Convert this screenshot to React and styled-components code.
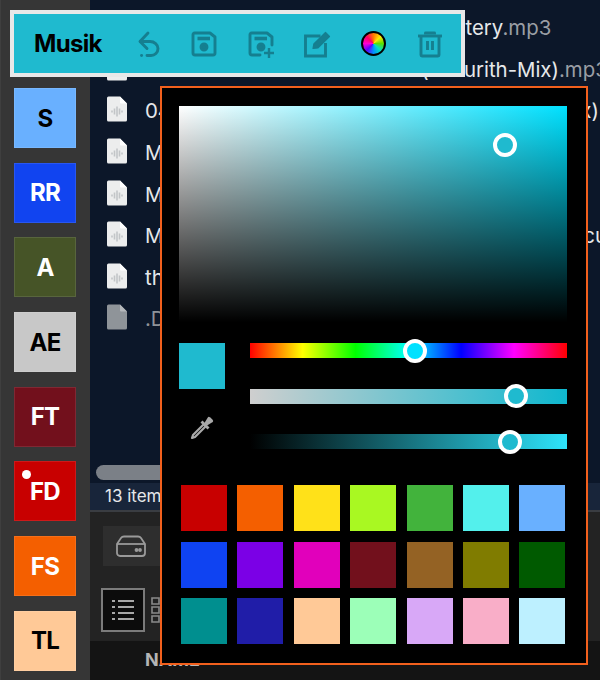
import React from "react";
import styled, { createGlobalStyle } from "styled-components";

const GlobalStyle = createGlobalStyle`
  html, body {
    margin: 0;
    padding: 0;
    background: #333;
  }
  body {
    font-family: Inter, "Liberation Sans", sans-serif;
  }
`;

const Page = styled.div`
  position: relative;
  width: 600px;
  height: 680px;
  overflow: hidden;
  display: flex;
`;

const Sidebar = styled.div`
  flex: 0 0 90px;
  box-sizing: border-box;
  background: #363636;
  border-left: 1px solid #3f3f3f;
  padding: 88px 0 0 13px;
  display: flex;
  flex-direction: column;
  gap: 14.7px;
`;

const Tile = styled.div`
  position: relative;
  flex: 0 0 60px;
  width: 62px;
  box-sizing: border-box;
  background: ${p => p.$bg};
  color: ${p => (p.$light ? "#fff" : "#000")};
  border: 1px solid rgba(255, 255, 255, 0.1);
  display: flex;
  align-items: center;
  justify-content: center;
  font-weight: 700;
  font-size: 24px;
  letter-spacing: -0.7px;
`;

const Dot = styled.span`
  position: absolute;
  top: 8px;
  left: 7px;
  width: 9px;
  height: 9px;
  border-radius: 50%;
  background: #fff;
`;

const Browser = styled.div`
  flex: 1;
  min-width: 0;
  display: flex;
  flex-direction: column;
`;

const FileArea = styled.div`
  position: relative;
  height: 483px;
  box-sizing: border-box;
  background: #0c1729;
  padding: 7px 0 0 17px;
`;

const FileRow = styled.div`
  height: 41.6px;
  display: flex;
  align-items: center;
  gap: 18px;
  font-size: 20.4px;
  white-space: nowrap;
  color: ${p => (p.$hidden ? "#8f9398" : "#e6e8ea")};
`;

const FileGlyph = styled.svg`
  flex: 0 0 20px;
  margin-bottom: 3px;
`;

const Ext = styled.span`
  color: #9a9ea4;
`;

const Scrollbar = styled.div`
  position: absolute;
  left: 6px;
  bottom: 3px;
  width: 200px;
  height: 15px;
  border-radius: 8px;
  background: #7b8087;
`;

const StatusBar = styled.div`
  height: 29px;
  box-sizing: border-box;
  background: #18253a;
  border-bottom: 2px solid #3a3d42;
  padding: 0 0 0 15px;
  font-size: 17px;
  line-height: 27px;
  color: #e6e8ea;
`;

const Lower = styled.div`
  flex: 1;
  background: #232323;
  display: flex;
  flex-direction: column;
`;

const DriveBar = styled.div`
  height: 75px;
  box-sizing: border-box;
  padding: 14px 0 0 13px;
`;

const DriveButton = styled.div`
  width: 150px;
  height: 40px;
  background: #2e2e2e;
  padding-left: 13px;
  display: flex;
  align-items: center;
`;

const ViewBar = styled.div`
  height: 46px;
  padding-left: 11px;
  display: flex;
  align-items: center;
  gap: 6px;
`;

const ListButton = styled.div`
  width: 44px;
  height: 44px;
  box-sizing: border-box;
  border: 2px solid #7b7b7b;
  background: #0c0c0c;
  display: flex;
  align-items: center;
  justify-content: center;
`;

const ColumnHeader = styled.div`
  flex: 1;
  margin-top: 8px;
  background: #141414;
  padding: 8px 0 0 55px;
  font-size: 18px;
  font-weight: 700;
  color: #b5b5b5;
`;

const Toolbar = styled.div`
  position: absolute;
  top: 10px;
  left: 10px;
  width: 455px;
  height: 67px;
  box-sizing: border-box;
  background: #1fbacf;
  border: 4px solid #e8e8e8;
  display: flex;
  align-items: center;
  padding-left: 20px;
`;

const Title = styled.div`
  width: 100px;
  font-size: 24px;
  font-weight: 700;
  letter-spacing: -0.7px;
  color: #000;
`;

const Tools = styled.div`
  display: flex;
  align-items: center;
  gap: 28.4px;
`;

const ToolIcon = styled.svg`
  display: block;
  width: 28px;
  height: 28px;
  fill: none;
  stroke: #157f90;
  stroke-width: 2.9;
  stroke-linecap: round;
  stroke-linejoin: round;
`;

const WheelSlot = styled.div`
  width: 28px;
  height: 28px;
  display: flex;
  align-items: center;
  justify-content: center;
`;

const Wheel = styled.div`
  flex: 0 0 25px;
  height: 25px;
  border-radius: 50%;
  box-sizing: border-box;
  border: 2.5px solid #000;
  background: conic-gradient(
    #ff7a00,
    #ffe600,
    #5be000,
    #00e0c0,
    #0090ff,
    #6000ff,
    #ff00d0,
    #ff0060,
    #ff7a00
  );
`;

const Picker = styled.div`
  position: absolute;
  top: 86px;
  left: 160px;
  width: 428px;
  height: 579px;
  box-sizing: border-box;
  background: #000;
  border: 2px solid #f2601d;
  padding: 18px 19px 0 17px;
`;

const SatArea = styled.div`
  position: relative;
  height: 216px;
  background:
    linear-gradient(to top, #000 0%, rgba(0, 0, 0, 0) 100%),
    linear-gradient(to right, #fff 0%, #00e1ff 100%);
`;

const Thumb = styled.div`
  position: absolute;
  left: ${p => p.$x}px;
  top: ${p => p.$y}px;
  width: 24px;
  height: 24px;
  box-sizing: border-box;
  border-radius: 50%;
  border: 4px solid #fff;
  background: ${p => p.$color};
  transform: translate(-50%, -50%);
`;

const Controls = styled.div`
  display: flex;
  gap: 25px;
  margin-top: 21px;
`;

const PreviewColumn = styled.div`
  flex: 0 0 46px;
  display: flex;
  flex-direction: column;
  align-items: center;
  gap: 27px;
`;

const Preview = styled.div`
  width: 46px;
  height: 46px;
  background: #1fbacf;
`;

const Sliders = styled.div`
  flex: 1;
  display: flex;
  flex-direction: column;
  gap: 30.5px;
`;

const Track = styled.div`
  position: relative;
  height: 15px;
  background: ${p => p.$bg};
`;

const Swatches = styled.div`
  display: grid;
  grid-template-columns: repeat(7, 46px);
  grid-auto-rows: 46px;
  column-gap: 10.4px;
  row-gap: 10.5px;
  margin: 36px 0 0 2px;
`;

const Swatch = styled.div`
  background: ${p => p.$bg};
`;

const tiles = [
  { label: "S", bg: "#69b0ff" },
  { label: "RR", bg: "#1144f0", light: true },
  { label: "A", bg: "#465427", light: true },
  { label: "AE", bg: "#c8c8c8" },
  { label: "FT", bg: "#72101c", light: true },
  { label: "FD", bg: "#c80000", light: true, dot: true },
  { label: "FS", bg: "#f45f00", light: true },
  { label: "TL", bg: "#ffc997" }
];

const files = [
  { name: "02-Shakti-Sundari-Sarasvat-Mystery", ext: ".mp3" },
  { name: "03-Lotus-Sutra-Gaia-Chant-(Tanurith-Mix)", ext: ".mp3" },
  { name: "04-Mantra-Sangha-Meditation-Dub-Long-Mix)", ext: ".mp3" },
  { name: "Mantra-One", ext: ".mp3" },
  { name: "Mantra-Two", ext: ".mp3" },
  { name: "Mantra-Three-Ganesha-Meditation-Dubs-Percussion", ext: ".mp3" },
  { name: "the-end", ext: ".mp3" },
  { name: ".DS_Store", hidden: true }
];

const swatches = [
  "#c80000", "#f45f00", "#ffe119", "#a9f822", "#42b33c", "#53f0ec", "#69b0ff",
  "#0f43f2", "#7b00e6", "#e100bb", "#72101c", "#946224", "#807c00", "#005a00",
  "#008f8f", "#201da8", "#ffc997", "#9cffb8", "#d8a8f7", "#f9aec8", "#bdf0ff"
];

const hue =
  "linear-gradient(to right, #f00 0%, #ff0 16.6%, #0f0 33.3%, #0ff 50%, #00f 66.6%, #f0f 83.3%, #f00 100%)";

const FileIcon = ({ hidden }) => (
  <FileGlyph width="20" height="26" viewBox="0 0 20 26">
    <path
      d="M1.5 0.5 H13 L20 7.5 V24 a1.5 1.5 0 0 1 -1.5 1.5 H1.5 A1.5 1.5 0 0 1 0 24 V2 A1.5 1.5 0 0 1 1.5 .5 Z"
      fill={hidden ? "#8f9499" : "#eceded"}
    />
    <path d="M13 .5 L20 7.5 H14 a1 1 0 0 1 -1 -1 Z" fill={hidden ? "#b5b8bb" : "#ffffff"} />
    {!hidden && (
      <path
        d="M5 14.5 v2 M7.5 12.5 v6 M10 10.5 v10 M12.5 12.5 v6 M15 14.5 v2"
        stroke="#c2c5c7"
        strokeWidth="1.6"
      />
    )}
  </FileGlyph>
);

const App = () => (
  <Page>
    <GlobalStyle />
    <Sidebar>
      {tiles.map(t => (
        <Tile key={t.label} $bg={t.bg} $light={t.light}>
          {t.dot && <Dot />}
          {t.label}
        </Tile>
      ))}
    </Sidebar>
    <Browser>
      <FileArea>
        {files.map(f => (
          <FileRow key={f.name} $hidden={f.hidden}>
            <FileIcon hidden={f.hidden} />
            <span>
              {f.name}
              {f.ext && <Ext>{f.ext}</Ext>}
            </span>
          </FileRow>
        ))}
        <Scrollbar />
      </FileArea>
      <StatusBar>13 items</StatusBar>
      <Lower>
        <DriveBar>
          <DriveButton>
            <svg width="30" height="22" viewBox="0 0 30 22" fill="none" stroke="#9a9a9a" strokeWidth="1.8">
              <path d="M8 1.5 H22 Q24 1.5 25 3 L29 9 V18 a3 3 0 0 1 -3 3 H4 a3 3 0 0 1 -3 -3 V9 L5 3 Q6 1.5 8 1.5 Z" />
              <path d="M1 9 H29" />
              <circle cx="20.5" cy="15" r="1" fill="#9a9a9a" />
              <circle cx="24" cy="15" r="1" fill="#9a9a9a" />
            </svg>
          </DriveButton>
        </DriveBar>
        <ViewBar>
          <ListButton>
            <svg width="24" height="24" viewBox="0 0 24 24" stroke="#a8a8a8" strokeWidth="2">
              <path d="M1 3 H4 M7 3 H23 M1 9 H4 M7 9 H23 M1 15 H4 M7 15 H23 M1 21 H4 M7 21 H23" />
            </svg>
          </ListButton>
          <svg width="10" height="26" viewBox="0 0 10 26" fill="none" stroke="#8a8a8a" strokeWidth="1.6">
            <path d="M1 1 H8 V7 H1 Z M1 10 H8 V16 H1 Z M1 19 H8 V25 H1 Z" />
          </svg>
        </ViewBar>
        <ColumnHeader>NAME</ColumnHeader>
      </Lower>
    </Browser>

    <Toolbar>
      <Title>Musik</Title>
      <Tools>
        <ToolIcon viewBox="0 0 28 28">
          <path d="M14 3 L6 11.5 L13 18.5" />
          <path d="M6.5 11.5 H16 a8 7 0 0 1 8 7 a7 7 0 0 1 -7 7 H13" />
          <path d="M7.5 25.5 h.1" />
        </ToolIcon>
        <ToolIcon viewBox="0 0 28 28">
          <path d="M4.5 3 H20 L25 7 V23 a2 2 0 0 1 -2 2 H5 a2 2 0 0 1 -2 -2 V4.5 a1.5 1.5 0 0 1 1.5 -1.5 Z" />
          <path d="M7.5 8.5 H20" strokeWidth="3.6" strokeLinecap="butt" />
          <circle cx="14" cy="17" r="3" fill="#157f90" />
        </ToolIcon>
        <ToolIcon viewBox="0 0 28 28">
          <path d="M13 25 H5 a2 2 0 0 1 -2 -2 V4.5 a1.5 1.5 0 0 1 1.5 -1.5 H20 L25 7 V15" />
          <path d="M7.5 8.5 H20" strokeWidth="3.6" strokeLinecap="butt" />
          <circle cx="14" cy="17" r="3" fill="#157f90" />
          <path d="M22 18 V28 M17 23 H27" strokeWidth="2.4" strokeLinecap="butt" />
        </ToolIcon>
        <ToolIcon viewBox="0 0 28 28">
          <path d="M17.5 6 H2.5 V26 H22.5 V13" strokeLinecap="butt" strokeLinejoin="miter" />
          <path d="M10 18.5 L10.8 14 L22.5 2.5 L26.5 6.5 L14.8 18 Z" fill="#157f90" strokeWidth="1.2" />
        </ToolIcon>
        <WheelSlot>
          <Wheel />
        </WheelSlot>
        <ToolIcon viewBox="0 0 28 28">
          <path d="M2 6 H26" strokeLinecap="butt" />
          <path d="M9.5 4.5 V3 H18.5 V4.5" strokeLinecap="butt" />
          <path d="M5 6 V25 a1 1 0 0 0 1 1 H22 a1 1 0 0 0 1 -1 V6" strokeLinecap="butt" />
          <path d="M11.5 11 V20 M16.5 11 V20" strokeLinecap="butt" />
        </ToolIcon>
      </Tools>
    </Toolbar>

    <Picker>
      <SatArea>
        <Thumb $x={326} $y={39} $color="#1fbacf" />
      </SatArea>
      <Controls>
        <PreviewColumn>
          <Preview />
          <svg width="24" height="24" viewBox="0 0 24 24" fill="none" stroke="#a8a8a8" strokeWidth="2.2">
            <path d="M14 8 L3 19 L2 22 L5 21 L16 10" strokeLinejoin="round" />
            <path d="M11.5 5.5 L18.5 12.5" strokeWidth="2.8" />
            <path d="M15 9 L19 2.5 L21.5 5 L15 9 Z" fill="#a8a8a8" strokeWidth="3.2" strokeLinejoin="round" />
          </svg>
        </PreviewColumn>
        <Sliders>
          <Track $bg={hue}>
            <Thumb $x={165} $y={7.5} $color="#00e1ff" />
          </Track>
          <Track $bg="linear-gradient(to right, #cfcfcf, #0fb8cf)">
            <Thumb $x={266} $y={7.5} $color="#1fbacf" />
          </Track>
          <Track $bg="linear-gradient(to right, #000, #2ee3fb)">
            <Thumb $x={260} $y={7.5} $color="#1fbacf" />
          </Track>
        </Sliders>
      </Controls>
      <Swatches>
        {swatches.map(c => (
          <Swatch key={c} $bg={c} />
        ))}
      </Swatches>
    </Picker>
  </Page>
);

export default App;
